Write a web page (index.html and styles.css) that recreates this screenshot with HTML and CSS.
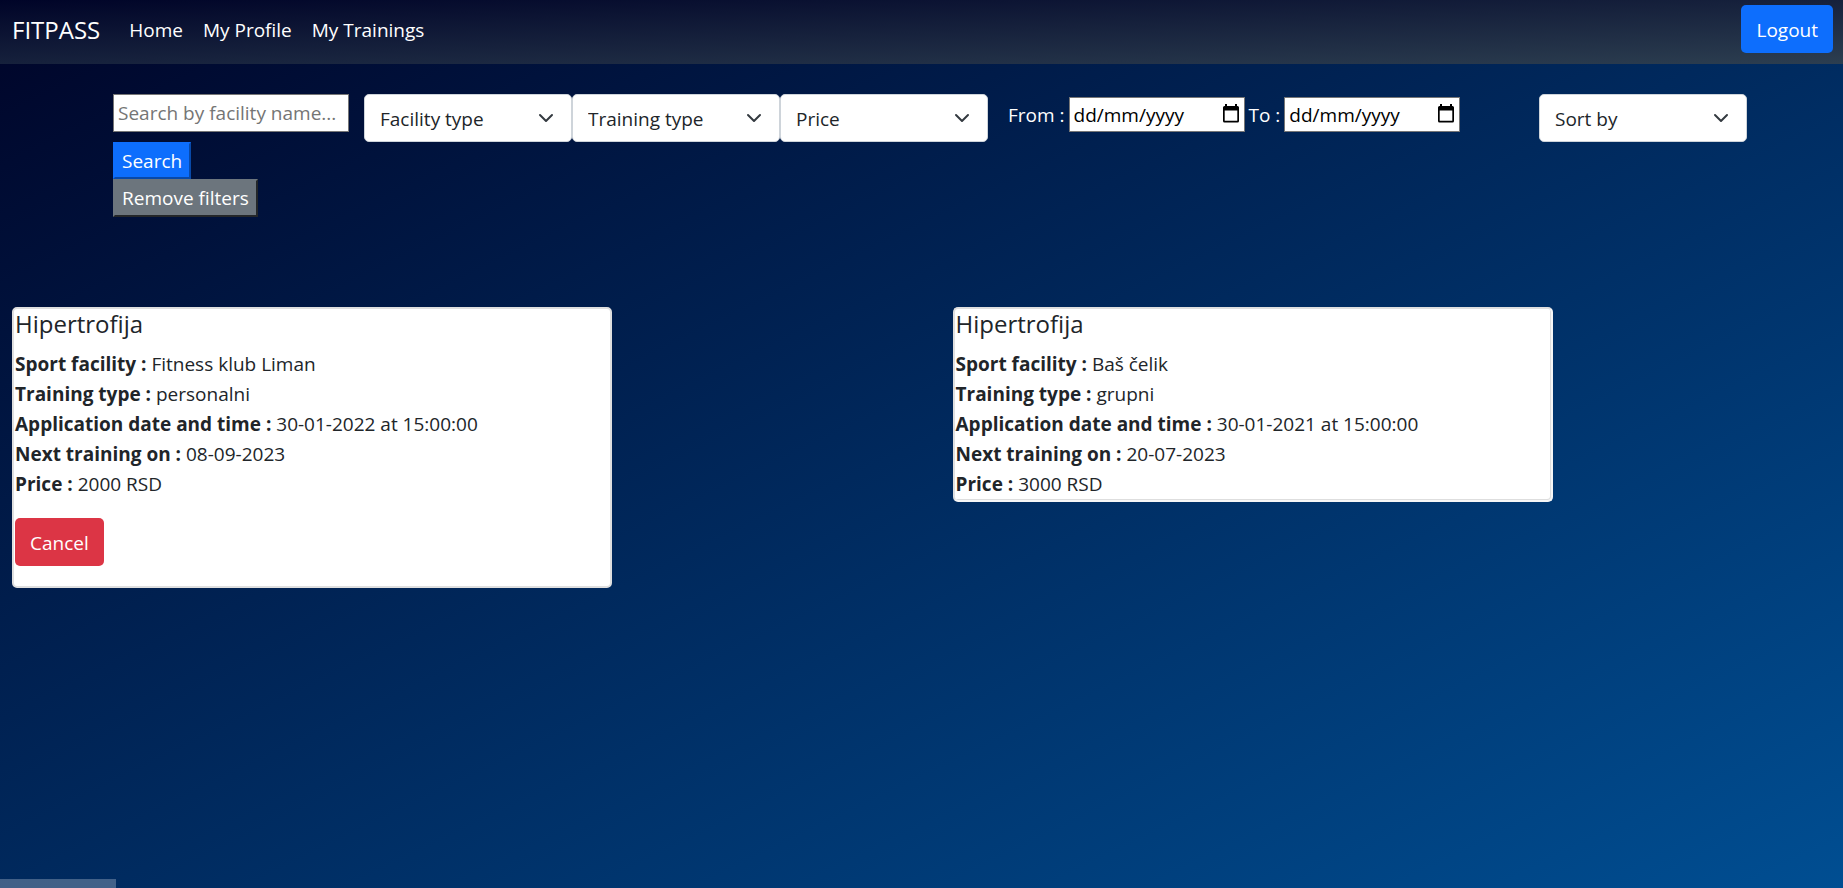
FILE: index.html
```html
<!DOCTYPE html>
<html lang="en">
<head>
<meta charset="utf-8">
<title>FITPASS</title>
<link rel="stylesheet" href="styles.css">
</head>
<body>
<nav class="navbar">
  <a class="brand" href="#">FITPASS</a>
  <a class="nav-link" href="#">Home</a>
  <a class="nav-link" href="#">My Profile</a>
  <a class="nav-link" href="#">My Trainings</a>
  <button class="btn btn-primary logout" type="button">Logout</button>
</nav>
<form class="filters">
  <div class="search-group">
    <input class="search" type="text" placeholder="Search by facility name..." aria-label="Search by facility name">
    <button class="plain plain-primary" type="button">Search</button>
    <button class="plain plain-secondary" type="button">Remove filters</button>
  </div>
  <div class="selects">
    <select class="select" aria-label="Facility type"><option>Facility type</option></select>
    <select class="select" aria-label="Training type"><option>Training type</option></select>
    <select class="select" aria-label="Price"><option>Price</option></select>
  </div>
  <div class="dates">
    <label for="from">From :</label>
    <span class="date"><input id="from" type="text" value="dd/mm/yyyy"><svg class="calendar" viewBox="0 0 16 20" aria-hidden="true"><path d="M2 0h2v2h8V0h2v2h.5q1.500 0 1.500 1.500V17q0 1.500-1.500 1.500h-13Q0 18.500 0 17V3.500Q0 2 1.500 2H2zM1.700 6.500v10.300h12.600V6.500z" fill="#000" fill-rule="evenodd"/></svg></span>
    <label for="to">To :</label>
    <span class="date"><input id="to" type="text" value="dd/mm/yyyy"><svg class="calendar" viewBox="0 0 16 20" aria-hidden="true"><path d="M2 0h2v2h8V0h2v2h.5q1.500 0 1.500 1.500V17q0 1.500-1.500 1.500h-13Q0 18.500 0 17V3.500Q0 2 1.500 2H2zM1.700 6.500v10.300h12.600V6.500z" fill="#000" fill-rule="evenodd"/></svg></span>
  </div>
  <select class="select sort" aria-label="Sort by"><option>Sort by</option></select>
</form>
<main class="trainings">
  <article class="card">
    <h5>Hipertrofija</h5>
    <p><b>Sport facility :</b> Fitness klub Liman</p>
    <p><b>Training type :</b> personalni</p>
    <p><b>Application date and time :</b> 30-01-2022 at 15:00:00</p>
    <p><b>Next training on :</b> 08-09-2023</p>
    <p><b>Price :</b> 2000 RSD</p>
    <button class="btn btn-danger" type="button">Cancel</button>
  </article>
  <article class="card card-past">
    <h5>Hipertrofija</h5>
    <p><b>Sport facility :</b> Baš čelik</p>
    <p><b>Training type :</b> grupni</p>
    <p><b>Application date and time :</b> 30-01-2021 at 15:00:00</p>
    <p><b>Next training on :</b> 20-07-2023</p>
    <p><b>Price :</b> 3000 RSD</p>
  </article>
</main>
<footer class="footer"></footer>
</body>
</html>
```
FILE: styles.css
```css
* { box-sizing: border-box; }
body {
  margin: 0;
  min-height: 100vh;
  display: flex;
  flex-direction: column;
  font: 19px/30px "Segoe UI", "Open Sans", "Noto Sans", sans-serif;
  color: #212529;
  background: linear-gradient(to bottom right, #000428, #004e92);
}
input, select, button { font: inherit; }
.navbar {
  display: flex;
  align-items: center;
  gap: 20px;
  height: 64px;
  padding: 0 10px 6px 12px;
  background: linear-gradient(to bottom right, #000428, #2c3e50);
}
.brand, .nav-link { padding-top: 2px; color: #fff; text-decoration: none; }
.brand { font-size: 24px; margin-right: 9px; }
.btn {
  height: 48px;
  padding: 1px 15px 0;
  border: 0;
  border-radius: 5px;
  color: #fff;
}
.btn-primary { background: #0d6efd; }
.btn-danger { background: #dc3545; margin: 19px 0 20px; }
.logout { margin-left: auto; }
.filters {
  display: flex;
  align-items: flex-start;
  padding: 30px 96px 0 113px;
}
.search-group {
  display: flex;
  flex-direction: column;
  align-items: flex-start;
  width: 236px;
  margin-right: 15px;
}
.search {
  width: 100%;
  height: 38px;
  margin-bottom: 10px;
  padding: 0 4px;
  border: 1px solid #767676;
}
.search::placeholder { color: #757575; }
.plain { padding: 1px 7px; border: 2px outset; color: #fff; }
.plain-primary { height: 37px; background: #0d6efd; border-color: #0d6efd; }
.plain-secondary { height: 38px; background: #6c757d; border-color: #6c757d; }
.selects { display: flex; }
.select {
  appearance: none;
  width: 208px;
  height: 48px;
  padding: 1px 45px 0 15px;
  border: 1px solid #ced4da;
  border-radius: 5px;
  color: #212529;
  background: #fff url("data:image/svg+xml,%3Csvg xmlns='http://www.w3.org/2000/svg' viewBox='0 0 16 16'%3E%3Cpath fill='none' stroke='%23343a40' stroke-linecap='round' stroke-linejoin='round' stroke-width='2' d='M2 5l6 6 6-6'/%3E%3C/svg%3E") no-repeat right 17px center / 16px 16px;
}
.dates {
  display: flex;
  align-items: center;
  gap: 4px;
  margin: 3px 0 0 20px;
  color: #fff;
}
.date { display: flex; align-items: center; position: relative; }
.date input { width: 176px; height: 35px; padding: 0 4px; border: 1px solid #767676; color: #000; }
.calendar { position: absolute; right: 6px; top: 7px; width: 16px; height: 20px; }
.sort { margin-left: auto; }
.trainings {
  display: grid;
  grid-template-columns: 1fr 1fr;
  gap: 62px;
  align-items: start;
  padding: 90px 12px 0;
}
.card {
  width: 600px;
  max-width: 100%;
  padding: 0 1px;
  border: 2px solid #dfdfdf;
  border-radius: 5px;
  background: #fff;
}
.card-past {
  padding-bottom: 1px;
  border-color: #dfdfdf #f6f6f6 #f6f6f6 #dfdfdf;
  box-shadow: inset -1px -1px 0 #dedede;
}
.card h5 { margin: 0 0 10px; font-size: 24px; font-weight: 500; line-height: 30px; }
.card p { margin: 0; }
.footer { width: 116px; height: 9px; margin-top: auto; background: rgba(255, 255, 255, 0.26); }
```
